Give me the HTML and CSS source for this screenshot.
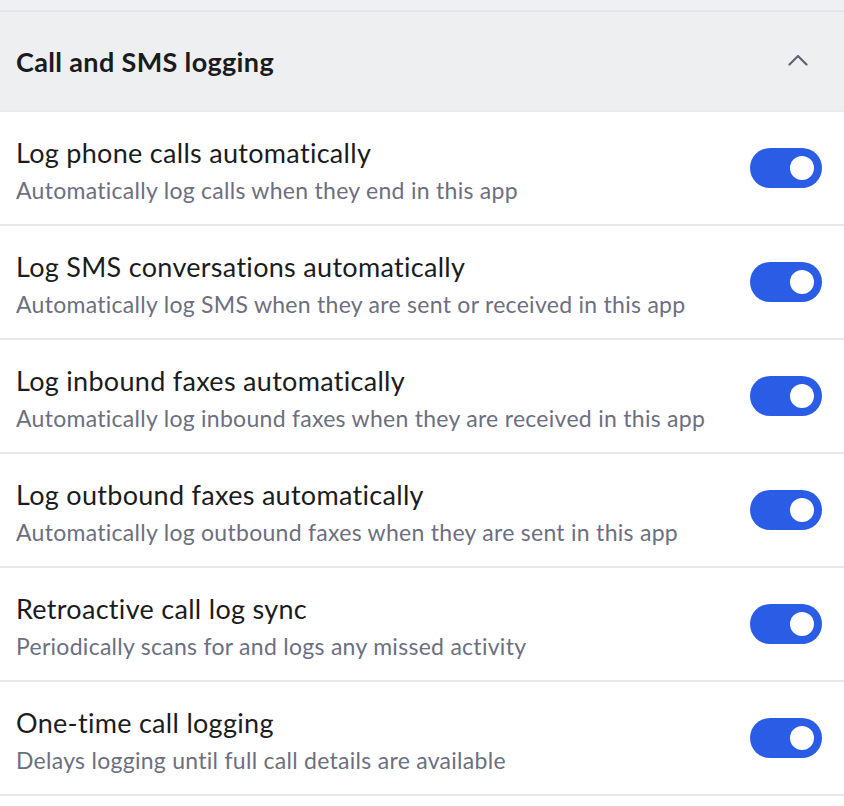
FILE: index.html
```html
<!DOCTYPE html>
<html>
<head>
<meta charset="utf-8">
<link rel="stylesheet" href="styles.css">
</head>
<body>
<div class="top-strip"></div>
<section class="panel">
  <div class="panel-header">
    <h2 class="panel-title">Call and SMS logging</h2>
    <svg class="chevron" width="20" height="12" viewBox="0 0 20 12"><path d="M1.5 10.5 L10 2 L18.5 10.5" fill="none" stroke="#5f6272" stroke-width="2.2" stroke-linecap="round" stroke-linejoin="round"/></svg>
  </div>
  <div class="row">
    <div class="text">
      <div class="title">Log phone calls automatically</div>
      <div class="desc">Automatically log calls when they end in this app</div>
    </div>
    <div class="toggle"><span class="knob"></span></div>
  </div>
  <div class="row">
    <div class="text">
      <div class="title">Log SMS conversations automatically</div>
      <div class="desc">Automatically log SMS when they are sent or received in this app</div>
    </div>
    <div class="toggle"><span class="knob"></span></div>
  </div>
  <div class="row">
    <div class="text">
      <div class="title">Log inbound faxes automatically</div>
      <div class="desc">Automatically log inbound faxes when they are received in this app</div>
    </div>
    <div class="toggle"><span class="knob"></span></div>
  </div>
  <div class="row">
    <div class="text">
      <div class="title">Log outbound faxes automatically</div>
      <div class="desc">Automatically log outbound faxes when they are sent in this app</div>
    </div>
    <div class="toggle"><span class="knob"></span></div>
  </div>
  <div class="row">
    <div class="text">
      <div class="title">Retroactive call log sync</div>
      <div class="desc">Periodically scans for and logs any missed activity</div>
    </div>
    <div class="toggle"><span class="knob"></span></div>
  </div>
  <div class="row">
    <div class="text">
      <div class="title">One-time call logging</div>
      <div class="desc">Delays logging until full call details are available</div>
    </div>
    <div class="toggle"><span class="knob"></span></div>
  </div>
</section>
</body>
</html>
```
FILE: styles.css
```css
html, body {
  margin: 0;
  padding: 0;
  background: #ffffff;
  font-family: Lato, "Noto Sans", sans-serif;
}
.top-strip {
  height: 10px;
  background: #eff0f2;
  border-bottom: 2px solid #e5e6e9;
}
.panel-header {
  height: 98px;
  background: #eeeff1;
  display: flex;
  align-items: center;
  justify-content: space-between;
  padding: 0 36px 0 16px;
  border-bottom: 2px solid #e9eaec;
}
.panel-title {
  margin: 0;
  font-size: 27px;
  font-weight: 700;
  letter-spacing: 0.35px;
  color: #1a1b1f;
}
.chevron {
  display: block;
  width: 20px;
  height: 12px;
  margin-top: -2px;
}
.row {
  height: 112px;
  display: flex;
  align-items: center;
  justify-content: space-between;
  padding: 0 22px 0 16px;
  border-bottom: 2px solid #e8e8ea;
}
.text {
  display: flex;
  flex-direction: column;
  gap: 7px;
  margin-top: 4px;
}
.title {
  font-size: 27px;
  letter-spacing: 0.3px;
  color: #1b1c20;
  line-height: 32px;
}
.desc {
  font-size: 23px;
  letter-spacing: 0.28px;
  color: #6c6f80;
  line-height: 28px;
}
.toggle {
  width: 72px;
  height: 40px;
  border-radius: 20px;
  background: #2a5ce6;
  display: flex;
  align-items: center;
  justify-content: flex-end;
  padding-right: 8px;
  box-sizing: border-box;
}
.knob {
  width: 24px;
  height: 24px;
  border-radius: 50%;
  background: #ffffff;
}
```
